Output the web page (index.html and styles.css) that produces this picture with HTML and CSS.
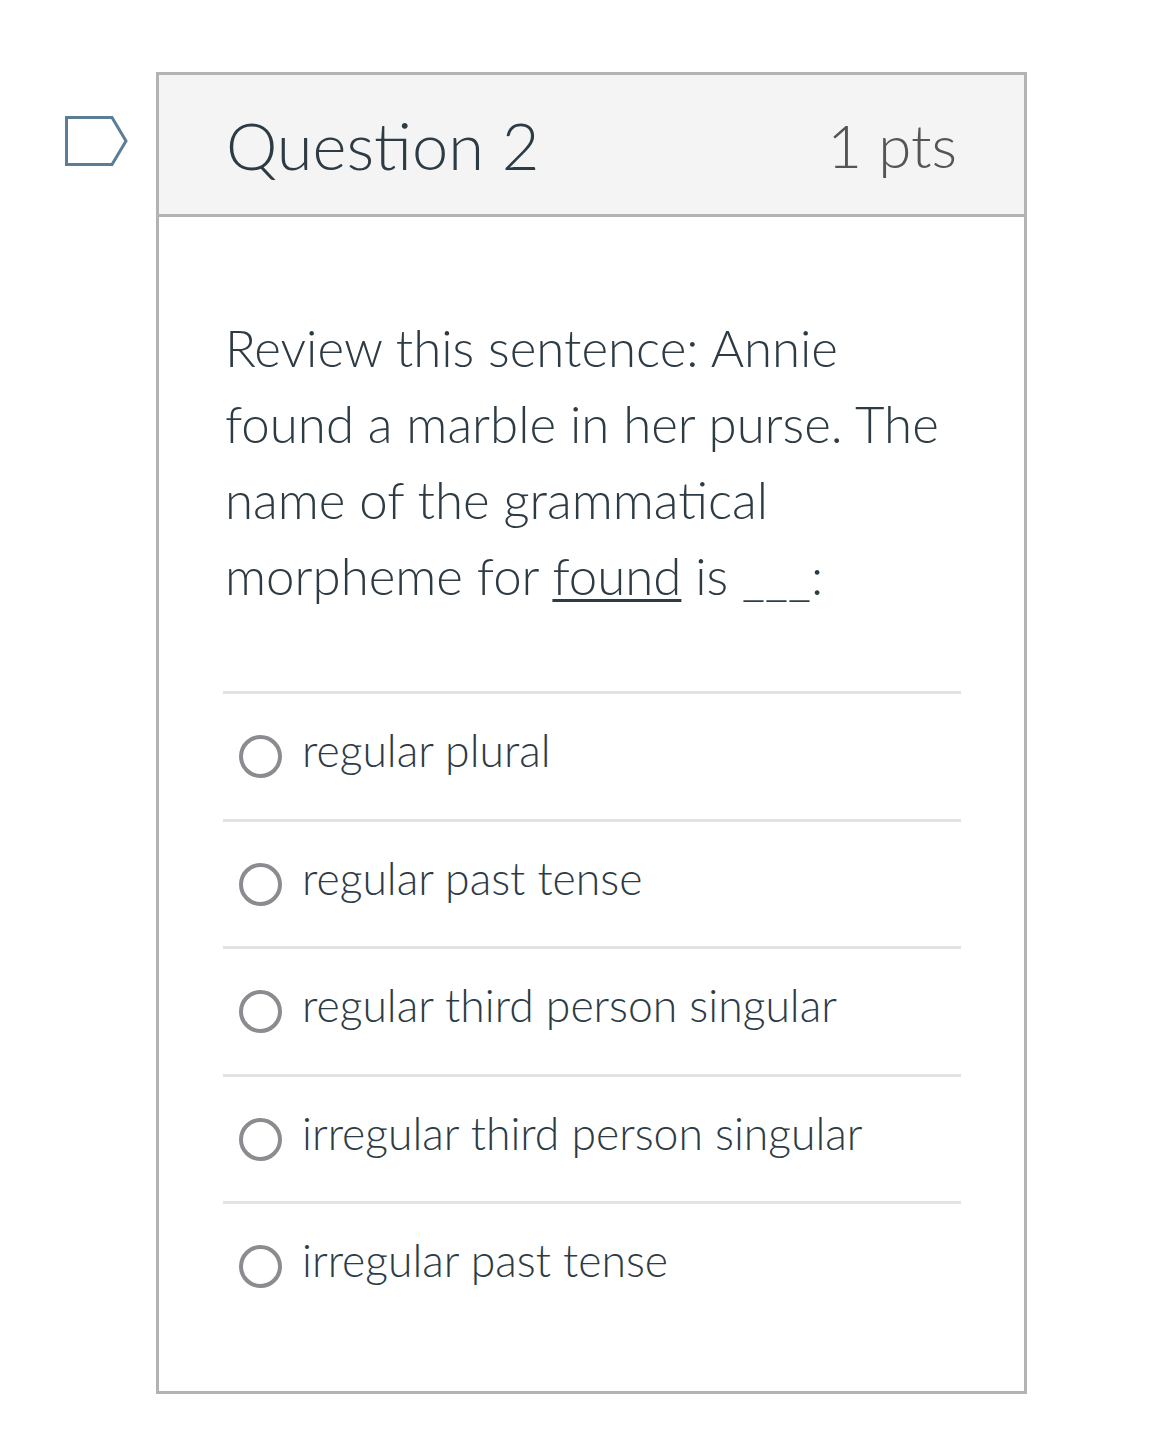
FILE: index.html
```html
<!DOCTYPE html>
<html lang="en">
<head>
<meta charset="utf-8">
<title>Question 2</title>
<link rel="stylesheet" href="styles.css">
</head>
<body>
<div class="page">
  <div class="flag">
    <svg width="68" height="54" viewBox="0 0 68 54" aria-hidden="true">
      <path d="M3.5 2.5 H49 L63 26 L49 49.5 H3.5 Z" fill="#fff" stroke="#5b7d96" stroke-width="3"/>
    </svg>
  </div>
  <div class="card">
    <div class="card-header">
      <span class="title">Question 2</span>
      <span class="points">1 pts</span>
    </div>
    <div class="card-body">
      <p class="question">Review this sentence: Annie found a marble in her purse. The name of the grammatical morpheme for <u>found</u> is ___:</p>
      <ul class="answers">
        <li class="answer"><span class="radio"></span><span class="label">regular plural</span></li>
        <li class="answer"><span class="radio"></span><span class="label">regular past tense</span></li>
        <li class="answer"><span class="radio"></span><span class="label">regular third person singular</span></li>
        <li class="answer"><span class="radio"></span><span class="label">irregular third person singular</span></li>
        <li class="answer"><span class="radio"></span><span class="label">irregular past tense</span></li>
      </ul>
    </div>
  </div>
</div>
</body>
</html>
```

FILE: styles.css
```css
html, body {
  margin: 0;
  padding: 0;
  background: #fff;
}

body {
  font-family: Lato, "Open Sans", "Liberation Sans", sans-serif;
  color: #2d3b45;
}

.page {
  display: flex;
  align-items: flex-start;
  padding: 72px 0 0 63px;
}

.flag {
  width: 93px;
  margin-top: 43px;
  flex: none;
}

.flag svg {
  display: block;
}

.card {
  width: 865px;
  border: 3px solid #b3b3b3;
  flex: none;
}

.card-header {
  height: 139px;
  background: #f4f4f4;
  border-bottom: 3px solid #b3b3b3;
  display: flex;
  align-items: center;
  justify-content: space-between;
  padding: 0 67px 0 67px;
}

.title {
  font-size: 65px;
  font-weight: 300;
  color: #2d3b45;
}

.points {
  font-size: 60px;
  font-weight: 300;
  color: #555;
}

.card-body {
  padding: 93px 63px 62px 64px;
}

.question {
  margin: 0;
  font-size: 51px;
  font-weight: 300;
  line-height: 76px;
  padding-left: 2px;
}

.question u {
  text-decoration-thickness: 3px;
  text-underline-offset: 4px;
}

.answers {
  list-style: none;
  margin: 77px 0 0 0;
  padding: 0;
}

.answer {
  display: flex;
  align-items: center;
  gap: 20px;
  height: 127.5px;
  border-top: 3px solid #e3e3e3;
  padding-left: 16px;
  padding-top: 1px;
  box-sizing: border-box;
}

.radio {
  width: 43px;
  height: 43px;
  box-sizing: border-box;
  border: 4px solid #8c8c90;
  border-radius: 50%;
  flex: none;
}

.label {
  font-size: 44.5px;
  font-weight: 300;
  color: #2d3b45;
  margin-top: -14px;
}
```
